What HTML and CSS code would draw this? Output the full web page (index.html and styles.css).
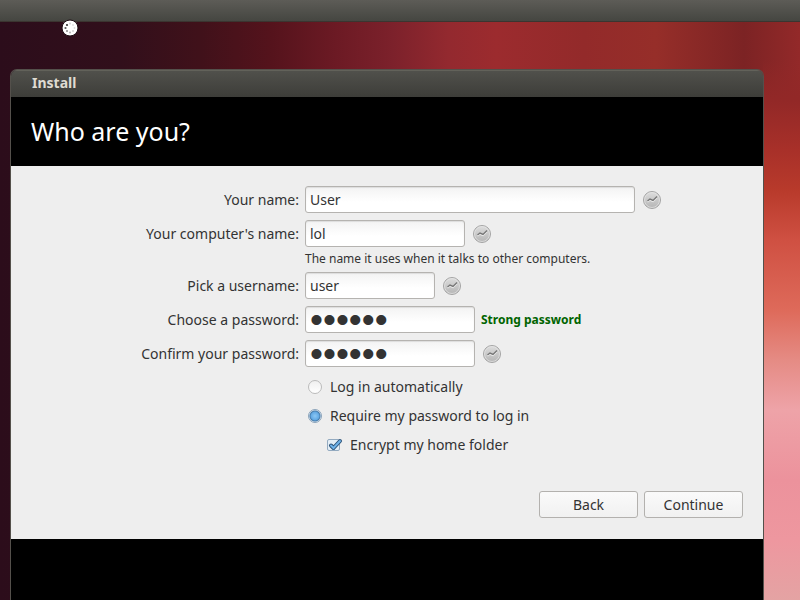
FILE: index.html
```html
<!DOCTYPE html>
<html lang="en">
<head>
    <meta charset="UTF-8">
    <meta name="viewport" content="width=device-width, initial-scale=1.0">
    <title>Install</title>
    <link rel="stylesheet" href="styles.css">
</head>
<body>
    <svg class="symbols" width="0" height="0" aria-hidden="true">
        <defs>
            <linearGradient id="disc" x1="0" y1="0" x2="0" y2="1">
                <stop offset="0" stop-color="#dedede"/>
                <stop offset="1" stop-color="#b4b4b4"/>
            </linearGradient>
        </defs>
        <symbol id="ok" viewBox="0 0 20 20">
            <circle cx="10" cy="10" r="8.5" fill="url(#disc)" stroke="#a4a4a4"/>
            <circle cx="10" cy="10" r="7.5" fill="none" stroke="#e6e6e6" stroke-opacity=".7"/>
            <path d="M5.5 12l2.5-2 3 1.5 4-4" fill="none" stroke="#eee" stroke-width="1.4"/>
            <path d="M5.5 11l2.5-2 3 1.5 4-4" fill="none" stroke="#777" stroke-width="1.4"/>
        </symbol>
    </svg>

    <div class="panel"></div>
    <svg class="spinner" viewBox="0 0 18 18" aria-hidden="true">
        <circle cx="9" cy="9" r="8" fill="#fff" stroke="#1c0b12"/>
        <circle cx="4.5" cy="9" r="1.1" fill="#555"/>
        <circle cx="6" cy="6" r="1.1" fill="#333"/>
        <circle cx="9" cy="4.5" r=".9" fill="#ccc"/>
        <circle cx="12" cy="6" r=".9" fill="#ddd"/>
        <circle cx="13.5" cy="9" r=".9" fill="#ddd"/>
        <circle cx="12" cy="12" r=".9" fill="#ccc"/>
        <circle cx="9" cy="13.5" r=".9" fill="#aaa"/>
        <circle cx="6" cy="12" r="1" fill="#888"/>
    </svg>

    <main class="window">
        <div class="titlebar">Install</div>
        <h1 class="heading">Who are you?</h1>
        <form class="content">
            <div class="row">
                <label for="name">Your name:</label>
                <input class="field field-name" type="text" id="name" value="User">
                <svg class="ok"><use href="#ok"/></svg>
            </div>
            <div class="row">
                <label for="computer">Your computer's name:</label>
                <input class="field field-computer" type="text" id="computer" value="lol">
                <svg class="ok"><use href="#ok"/></svg>
            </div>
            <p class="hint">The name it uses when it talks to other computers.</p>
            <div class="row">
                <label for="username">Pick a username:</label>
                <input class="field field-username" type="text" id="username" value="user">
                <svg class="ok"><use href="#ok"/></svg>
            </div>
            <div class="row">
                <label for="password">Choose a password:</label>
                <input class="field field-password" type="password" id="password" value="secret">
                <span class="strength">Strong password</span>
            </div>
            <div class="row">
                <label for="confirm">Confirm your password:</label>
                <input class="field field-password" type="password" id="confirm" value="secret">
                <svg class="ok"><use href="#ok"/></svg>
            </div>

            <div class="options">
                <label class="option"><input class="radio" type="radio" name="login">Log in automatically</label>
                <label class="option"><input class="radio" type="radio" name="login" checked>Require my password to log in</label>
                <label class="option option-nested">
                    <span class="tick">
                        <input class="checkbox" type="checkbox" checked>
                        <svg class="tick-mark" viewBox="0 0 16 16"><path d="M4 8.5l2.5 2.5L13 4" fill="none" stroke="#2b5278" stroke-width="4" stroke-linejoin="round" stroke-linecap="round"/><path d="M4 8.5l2.5 2.5L13 4" fill="none" stroke="#6fb2e8" stroke-width="2" stroke-linecap="round"/></svg>
                    </span>
                    Encrypt my home folder
                </label>
            </div>

            <div class="buttons">
                <button type="button">Back</button>
                <button type="button">Continue</button>
            </div>
        </form>
        <div class="slides"></div>
    </main>
</body>
</html>
```
FILE: styles.css
```css
* {
    margin: 0;
    padding: 0;
    box-sizing: border-box;
}
body {
    display: flex;
    flex-direction: column;
    min-height: 100vh;
    font-family: 'Noto Sans', 'Open Sans', sans-serif;
    font-size: 14px;
    line-height: 20px;
    color: #333;
    background:
        linear-gradient(to bottom, rgba(146, 40, 38, 0) 60px, #922827 100px, #a83029 150px, #b83a2b 190px, #cf5042 240px, #de6a5a 310px, #e58b84 360px, #eea3a8 410px, #ec929c 480px, #ee979f 540px, #e4a3a3 600px) right top / 37px 100% no-repeat,
        linear-gradient(to right, #2c0d1b 0%, #310f1b 15%, #40111a 25%, #55131c 34%, #6c1a24 42%, #7c212b 49%, #93292f 56%, #9c2b2e 62%, #932a2a 73%, #962e29 82%, #7c2324 93%, #932929 100%);
}
.symbols {
    position: absolute;
}
.panel {
    height: 22px;
    background: linear-gradient(#5d5c57, #454641);
    border-bottom: 1px solid #3b3530;
}
.spinner {
    position: absolute;
    left: 61px;
    top: 19px;
    width: 18px;
    height: 18px;
}
.window {
    flex: 1;
    display: flex;
    flex-direction: column;
    margin: 47px 36px 0 10px;
    border: 1px solid #54504b;
    border-bottom: none;
    border-radius: 7px 7px 0 0;
    overflow: hidden;
}
.titlebar {
    height: 27px;
    padding: 3px 21px;
    background: linear-gradient(#51514c, #3d3d39);
    box-shadow: inset 0 1px #62625a;
    color: #dfdbd2;
    font-weight: bold;
}
.heading {
    padding: 16px 20px;
    background: #000;
    color: #fff;
    font-size: 25px;
    font-weight: normal;
    line-height: 37px;
}
.content {
    padding: 20px 20px 21px 0;
    background: #eee;
}
.row {
    display: flex;
    align-items: center;
    gap: 6px;
    margin-bottom: 7px;
}
.row > label {
    width: 288px;
    text-align: right;
}
.field {
    height: 27px;
    padding: 0 4px;
    border: 1px solid #b5b3b0;
    border-radius: 3px;
    background: linear-gradient(#f3f3f3, #fff 60%);
    box-shadow: inset 0 1px 1px #ddd;
    font: inherit;
    color: #333;
}
.field-name {
    width: 330px;
}
.field-computer {
    width: 160px;
}
.field-username {
    width: 130px;
}
.field-password {
    width: 170px;
    font-family: 'Liberation Sans', Arial, sans-serif;
    font-size: 37px;
}
.ok {
    width: 20px;
    height: 20px;
    margin-left: 1px;
}
.hint {
    margin: -5px 0 3px 294px;
    font-size: 12px;
}
.strength {
    color: #006400;
    font-size: 12px;
    font-weight: bold;
}
.options {
    display: flex;
    flex-direction: column;
    align-items: flex-start;
    gap: 8px;
    margin: 9px 0 36px 297px;
}
.option {
    display: flex;
    align-items: center;
    gap: 8px;
    height: 21px;
}
.option-nested {
    margin-left: 19px;
    gap: 7px;
}
.radio {
    appearance: none;
    width: 14px;
    height: 14px;
    border: 1px solid #bbb;
    border-radius: 50%;
    background: linear-gradient(#f0f0f0, #fff);
}
.radio:checked {
    border-color: #8ba3ba;
    background: radial-gradient(circle, #8cc8f5 0, #62a9e4 4px, #4579a8 5px, #dbe8f3 6px);
}
.tick {
    position: relative;
    display: flex;
    width: 16px;
    height: 16px;
}
.checkbox {
    appearance: none;
    width: 13px;
    height: 12px;
    margin-top: 2px;
    border: 1px solid #93aac0;
    border-radius: 2px;
    background: #e4eef6;
}
.tick-mark {
    position: absolute;
    inset: 0;
    visibility: hidden;
    pointer-events: none;
}
.checkbox:checked + .tick-mark {
    visibility: visible;
}
.buttons {
    display: flex;
    justify-content: flex-end;
    gap: 6px;
}
button {
    width: 99px;
    height: 27px;
    border: 1px solid #b3b1ae;
    border-radius: 3px;
    background: linear-gradient(#fafafa, #f1f1f1);
    font: inherit;
    color: #333;
    cursor: pointer;
}
.slides {
    flex: 1;
    background: #000;
}
```
